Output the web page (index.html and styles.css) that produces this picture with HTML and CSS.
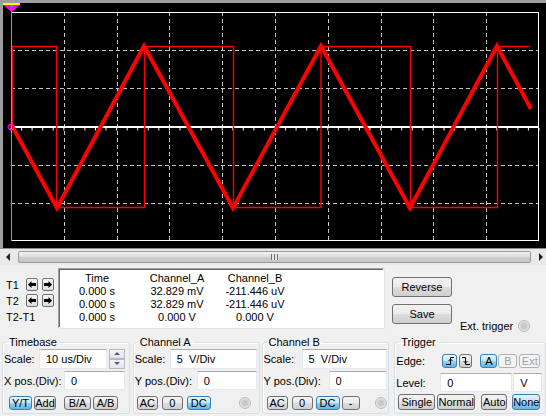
FILE: index.html
```html
<!DOCTYPE html>
<html lang="en">

<head>
    <meta charset="UTF-8">
    <title>Oscilloscope XSC1</title>
    <link rel="stylesheet" href="styles.css">
</head>

<body>
    <div class="screen">
        <svg class="plot" width="543" height="245" viewBox="3 3 543 245">
            <rect x="3" y="3" width="543" height="245" fill="#000" />
            <!-- grid -->
            <g stroke="#c4c4c4" stroke-width="1" stroke-dasharray="4 3">
                <line x1="64.5" y1="12" x2="64.5" y2="241" />
                <line x1="117.5" y1="12" x2="117.5" y2="241" />
                <line x1="169.5" y1="12" x2="169.5" y2="241" />
                <line x1="222.5" y1="12" x2="222.5" y2="241" />
                <line x1="275.5" y1="12" x2="275.5" y2="241" />
                <line x1="328.5" y1="12" x2="328.5" y2="241" />
                <line x1="381.5" y1="12" x2="381.5" y2="241" />
                <line x1="433.5" y1="12" x2="433.5" y2="241" />
                <line x1="486.5" y1="12" x2="486.5" y2="241" />
                <line x1="11" y1="50.5" x2="539" y2="50.5" />
                <line x1="11" y1="88.5" x2="539" y2="88.5" />
                <line x1="11" y1="165.5" x2="539" y2="165.5" />
                <line x1="11" y1="203.5" x2="539" y2="203.5" />
            </g>
            <rect x="11.5" y="12.5" width="527" height="228" fill="none" stroke="#fff" stroke-width="1" />
            <line x1="11" y1="127" x2="539" y2="127" stroke="#fff" stroke-width="2" />
            <path id="ticks" stroke="#fff" stroke-width="1" d="" />
            <!-- channel B, square -->
            <path fill="none" stroke="#f00" stroke-width="1.4"
                d="M12.5 127 V46.5 H56.5 V207.5 H144.5 V46.5 H233.5 V207.5 H321 V46.5 H410.5 V207.5 H497.5 V46.5 H530" />
            <!-- channel A, triangle -->
            <polyline fill="none" stroke="#f00" stroke-width="4" stroke-linejoin="miter"
                points="11,124 57,208 144,46 233,208 321,46 410,208 497,46 531,109" />
            <!-- cursor -->
            <line x1="11.5" y1="4" x2="11.5" y2="241" stroke="#0f0" stroke-width="1" />
            <line x1="3" y1="4" x2="20" y2="4" stroke="#ff0" stroke-width="2" />
            <polygon points="3,5 20,5 11.5,12" fill="#f0f" />
            <path d="M10 6 H13 M11.5 6 V10" stroke="#0cc" stroke-width="1" />
            <circle cx="11" cy="127" r="3" fill="none" stroke="#f0f" stroke-width="1" />
        </svg>
    </div>

    <div class="hscroll">
        <span class="sarrow sleft"></span>
        <div class="thumb"><span class="grip"></span></div>
        <span class="sarrow sright"></span>
    </div>

    <div class="panel">
        <div class="readout">
            <div class="cursors">
                <div class="crow">
                    <span class="tname">T1</span>
                    <button class="nudge"><svg width="8" height="7" viewBox="0 0 8 7"><path d="M0 3.5 L3.5 0 V2 H8 V5 H3.5 V7Z" /></svg></button>
                    <button class="nudge"><svg width="8" height="7" viewBox="0 0 8 7"><path d="M8 3.5 L4.5 0 V2 H0 V5 H4.5 V7Z" /></svg></button>
                </div>
                <div class="crow">
                    <span class="tname">T2</span>
                    <button class="nudge"><svg width="8" height="7" viewBox="0 0 8 7"><path d="M0 3.5 L3.5 0 V2 H8 V5 H3.5 V7Z" /></svg></button>
                    <button class="nudge"><svg width="8" height="7" viewBox="0 0 8 7"><path d="M8 3.5 L4.5 0 V2 H0 V5 H4.5 V7Z" /></svg></button>
                </div>
                <div class="crow diff">T2-T1</div>
            </div>

            <div class="data">
                <span>Time</span><span>Channel_A</span><span>Channel_B</span>
                <span>0.000 s</span><span>32.829 mV</span><span>-211.446 uV</span>
                <span>0.000 s</span><span>32.829 mV</span><span>-211.446 uV</span>
                <span>0.000 s</span><span>0.000 V</span><span>0.000 V</span>
            </div>

            <div class="side">
                <div class="sidebtns">
                    <button class="btn wide">Reverse</button>
                    <button class="btn wide save">Save</button>
                </div>
                <div class="ext">Ext. trigger <span class="led"></span></div>
            </div>
        </div>

        <div class="controls">
            <fieldset class="grp timebase">
                <legend>Timebase</legend>
                <div class="row r1">
                    <label class="lbl" style="width:35px">Scale:</label>
                    <input class="field" style="width:68px" value="10 us/Div">
                    <div class="spin"><span class="up"></span><span class="down"></span></div>
                </div>
                <div class="row r2">
                    <label class="lbl" style="width:60px">X pos.(Div):</label>
                    <input class="field" style="width:61px" value="0">
                </div>
                <div class="row r3">
                    <button class="btn on" style="margin-left:5px;width:23px">Y/T</button>
                    <button class="btn" style="margin-left:2px;width:22px">Add</button>
                    <button class="btn" style="margin-left:8px;width:27px">B/A</button>
                    <button class="btn" style="margin-left:2px;width:25px">A/B</button>
                </div>
            </fieldset>

            <fieldset class="grp chana">
                <legend>Channel A</legend>
                <div class="row r1">
                    <label class="lbl" style="width:35px">Scale:</label>
                    <input class="field" style="width:87px" value="5  V/Div">
                </div>
                <div class="row r2">
                    <label class="lbl" style="width:62px">Y pos.(Div):</label>
                    <input class="field" style="width:60px" value="0">
                </div>
                <div class="row r3">
                    <button class="btn" style="margin-left:2px;width:21px">AC</button>
                    <button class="btn" style="margin-left:4px;width:21px">0</button>
                    <button class="btn on" style="margin-left:4px;width:24px">DC</button>
                    <span class="led" style="margin-left:28px"></span>
                </div>
            </fieldset>

            <fieldset class="grp chanb">
                <legend>Channel B</legend>
                <div class="row r1">
                    <label class="lbl" style="width:38px">Scale:</label>
                    <input class="field" style="width:85px" value="5  V/Div">
                </div>
                <div class="row r2">
                    <label class="lbl" style="width:65px">Y pos.(Div):</label>
                    <input class="field" style="width:58px" value="0">
                </div>
                <div class="row r3">
                    <button class="btn" style="margin-left:3px;width:21px">AC</button>
                    <button class="btn" style="margin-left:4px;width:21px">0</button>
                    <button class="btn on" style="margin-left:3px;width:24px">DC</button>
                    <button class="btn" style="margin-left:2px;width:18px">-</button>
                    <span class="led" style="margin-left:15px"></span>
                </div>
            </fieldset>

            <fieldset class="grp trigger">
                <legend>Trigger</legend>
                <div class="row t1">
                    <label class="lbl" style="width:46px">Edge:</label>
                    <button class="btn edge on" style="width:15px"><svg width="10" height="10" viewBox="0 0 10 10"><path d="M1 8.5 H5.5 V1.5 H9 M3.5 5 L5.5 3 L7.5 5" fill="none" stroke="#000" /></svg></button>
                    <button class="btn edge" style="margin-left:2px;width:13px"><svg width="10" height="10" viewBox="0 0 10 10"><path d="M1 1.5 H4.5 V8.5 H9 M2.5 5 L4.5 7 L6.5 5" fill="none" stroke="#000" /></svg></button>
                    <button class="btn on" style="margin-left:8px;width:17px">A</button>
                    <button class="btn off" style="margin-left:1px;width:19px">B</button>
                    <button class="btn off" style="margin-left:2px;width:21px">Ext</button>
                </div>
                <div class="row t2">
                    <label class="lbl" style="width:44px">Level:</label>
                    <input class="field" style="width:72px" value="0">
                    <input class="field" style="margin-left:1px;width:29px" value="V">
                </div>
                <div class="row t3">
                    <button class="btn" style="margin-left:2px;width:37px">Single</button>
                    <button class="btn" style="margin-left:2px;width:38px">Normal</button>
                    <button class="btn" style="margin-left:6px;width:26px">Auto</button>
                    <button class="btn on" style="margin-left:5px;width:28px">None</button>
                </div>
            </fieldset>
        </div>
    </div>

    <script>
        // minor ticks on the centre line, 5 per division
        let d = '';
        for (let i = 0; i <= 50; i++) {
            let x = 11 + i * 10.56;
            d += 'M' + x.toFixed(1) + ' 128 V130.5 ';
        }
        document.getElementById('ticks').setAttribute('d', d);
    </script>
</body>

</html>
```

FILE: styles.css
```css
* {
    box-sizing: border-box;
}

body {
    margin: 0;
    width: 546px;
    height: 416px;
    overflow: hidden;
    background-color: #f0f0f0;
    font-family: "Liberation Sans", Arial, sans-serif;
    font-size: 11px;
    color: #000;
}

.screen {
    height: 248px;
    border-top: 3px solid #9e9e9e;
    border-left: 3px solid #9e9e9e;
    background-color: #000;
}

.plot {
    display: block;
}

/* scrollbar under the screen */
.hscroll {
    height: 17px;
    border-top: 1px solid #8c8c8c;
    background-color: #e9e9e9;
    display: flex;
    align-items: center;
    position: relative;
}

.sarrow {
    width: 0;
    height: 0;
    border-top: 4px solid transparent;
    border-bottom: 4px solid transparent;
}

.sleft {
    margin-left: 6px;
    border-right: 4px solid #222;
}

.sright {
    margin-left: 8px;
    border-left: 4px solid #222;
}

.thumb {
    margin-left: 8px;
    width: 513px;
    height: 12px;
    border: 1px solid #9a9a9a;
    border-radius: 2px;
    background: linear-gradient(#f2f2f2, #dcdcdc 50%, #cdcdcd 51%, #c6c6c6);
    display: flex;
    justify-content: center;
    align-items: center;
}

.grip {
    width: 8px;
    height: 6px;
    background: repeating-linear-gradient(90deg, #6f6f6f 0 1px, #e6e6e6 1px 3px);
}

/* lower panel */
.readout {
    height: 71px;
    display: flex;
}

.cursors {
    width: 58px;
    padding-top: 13px;
    padding-left: 6px;
}

.crow {
    height: 13px;
    display: flex;
    align-items: center;
    margin-bottom: 3px;
}

.crow.diff {
    margin-top: 1px;
}

.tname {
    width: 21px;
}

.nudge {
    width: 12px;
    height: 13px;
    margin: 0 4px 0 0;
    padding: 0;
    border: 1px solid #707070;
    border-radius: 2px;
    background: linear-gradient(#f6f6f6, #dedede);
    display: flex;
    align-items: center;
    justify-content: center;
}

.data {
    margin-top: 3px;
    width: 326px;
    height: 60px;
    background-color: #fff;
    border: 1px solid;
    border-color: #a0a0a0 #fff #fff #a0a0a0;
    box-shadow: inset 1px 1px #696969, 1px 1px #e3e3e3;
    padding-top: 3px;
    display: grid;
    grid-template-columns: 76px 84px 72px;
    grid-auto-rows: 13px;
    line-height: 13px;
    text-align: center;
}

.side {
    display: flex;
    margin-left: 8px;
}

.sidebtns {
    display: flex;
    flex-direction: column;
}

.btn {
    height: 14px;
    padding: 0;
    font-family: inherit;
    font-size: 11px;
    line-height: 12px;
    color: #000;
    border: 1px solid #707070;
    border-radius: 3px;
    background: linear-gradient(#f2f2f2, #ebebeb 50%, #dddddd 51%, #cfcfcf);
    display: flex;
    align-items: center;
    justify-content: center;
}

.btn.on {
    border-color: #3c7fb1;
    background: linear-gradient(#e5f4fc, #c4e5f6 50%, #98d1ef 51%, #68b3db);
}

.btn.off {
    color: #a0a0a0;
    border-color: #adb2b5;
    background: #f4f4f4;
}

.btn.wide {
    width: 60px;
    height: 20px;
    margin-top: 12px;
}

.btn.save {
    margin-top: 7px;
}

.ext {
    margin-left: 8px;
    align-self: flex-end;
    margin-bottom: 4px;
    display: flex;
    align-items: center;
    white-space: nowrap;
}

.ext .led {
    margin-left: 5px;
}

.led {
    display: inline-block;
    width: 12px;
    height: 12px;
    border-radius: 50%;
    border: 1px solid #b8b8b8;
    background: radial-gradient(circle, #c9c9c9 0 3px, #e2e2e2 4px, #ededed);
}

/* group boxes */
.controls {
    display: flex;
    height: 78px;
}

.grp {
    margin: 0;
    height: 78px;
    padding: 0 1px 0 1px;
    border: 1px solid #d5dfe5;
    border-radius: 3px;
    box-shadow: inset 1px 1px #fff;
}

.grp legend {
    margin-left: 2px;
    padding: 0 3px;
    line-height: 13px;
}

.timebase {
    margin-left: 2px;
    width: 128px;
}

.chana {
    margin-left: 3px;
    width: 127px;
}

.chanb {
    margin-left: 2px;
    width: 128px;
}

.trigger {
    margin-left: 5px;
    width: 152px;
    padding-top: 2px;
}

.row {
    display: flex;
    align-items: center;
}

.lbl {
    white-space: nowrap;
}

.r1 {
    height: 20px;
}

.r2 {
    height: 19px;
    margin-top: 2px;
}

.r3 {
    height: 15px;
    margin-top: 5px;
}

.t1 {
    height: 20px;
}

.t2 {
    height: 19px;
    margin-top: 2px;
}

.t3 {
    height: 16px;
    margin-top: 2px;
}

.t3 .btn {
    height: 16px;
}

.field {
    height: 100%;
    margin: 0;
    padding: 0 0 0 6px;
    font-family: inherit;
    font-size: 11px;
    color: #000;
    background-color: #fff;
    border: 1px solid #e3e9ef;
    border-top-color: #abadb3;
    border-radius: 0;
    outline: none;
}

.spin {
    margin-left: 2px;
    width: 16px;
    height: 20px;
    display: flex;
    flex-direction: column;
}

.spin span {
    flex: 1;
    border: 1px solid #b5b8bd;
    background: linear-gradient(#f5f5f5, #e1e3e6);
    position: relative;
}

.spin .up::after,
.spin .down::after {
    content: "";
    position: absolute;
    left: 4px;
    top: 2px;
    border-left: 3px solid transparent;
    border-right: 3px solid transparent;
}

.spin .up::after {
    border-bottom: 3px solid #4d6185;
}

.spin .down::after {
    border-top: 3px solid #4d6185;
}

.edge svg {
    display: block;
}
```
